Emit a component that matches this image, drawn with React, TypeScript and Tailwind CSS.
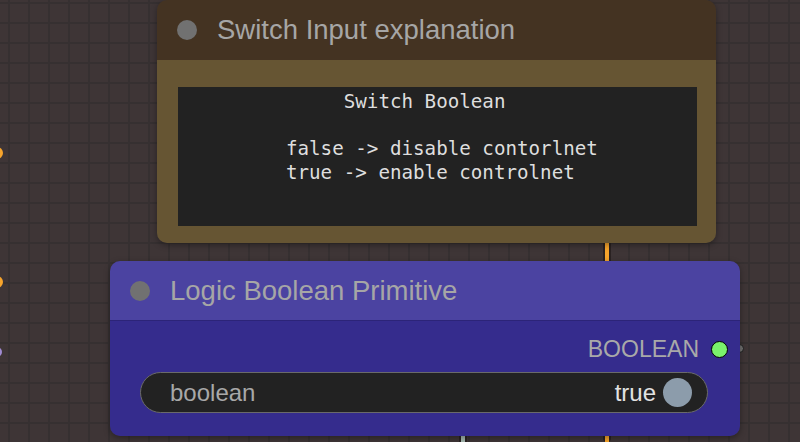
import React from "react";

const NOTE_TEXT = [
    "              Switch Boolean",
    "",
    "         false -> disable contorlnet",
    "         true -> enable controlnet",
].join("\n");

function TitleBar({ title, className }: { title: string; className: string }) {
    return (
        <div className={`h-[60px] shrink-0 flex items-center pl-[20px] gap-[20px] ${className}`}>
            <div className="w-[20px] h-[20px] rounded-full bg-[#717171]" />
            <span className="text-[27.5px] leading-none text-[#a6a6a6] whitespace-nowrap">{title}</span>
        </div>
    );
}

function NoteNode() {
    return (
        <div className="absolute left-[157px] top-0 w-[559px] h-[243px] rounded-[10px] overflow-hidden flex flex-col shadow-[0_2px_6px_rgba(0,0,0,0.35)]">
            <TitleBar title="Switch Input explanation" className="bg-[#443322]" />
            <div className="flex-1 bg-[#665533] pt-[27px] pl-[21px] pr-[19px] pb-[17px]">
                <pre className="h-full bg-[#222222] text-[#dedede] font-['DejaVu_Sans_Mono',monospace] text-[19.2px] leading-[23.5px] pt-[3px] pl-[4px] whitespace-pre overflow-hidden">
                    {NOTE_TEXT}
                </pre>
            </div>
        </div>
    );
}

function BooleanNode() {
    return (
        <div className="absolute left-[110px] top-[261px] w-[630px] h-[175px] rounded-[10px] overflow-hidden flex flex-col shadow-[0_2px_6px_rgba(0,0,0,0.35)]">
            <TitleBar title="Logic Boolean Primitive" className="bg-[#4b43a1] border-b border-[#2c2478]" />
            <div className="flex-1 bg-[#352c8d] pt-[8px] flex flex-col">
                {/* output slot */}
                <div className="h-[40px] flex items-center justify-end gap-[12px] pr-[12px]">
                    <span className="text-[23px] leading-none text-[#a9a9a9]">BOOLEAN</span>
                    <div className="w-[17px] h-[17px] rounded-full bg-[#7af26c] border-[1.5px] border-black" />
                </div>
                {/* toggle widget */}
                <div className="mt-[3px] ml-[30px] w-[568px] h-[41px] rounded-full bg-[#222222] border-[1.5px] border-[#6a6a6a] flex items-center pl-[29px] pr-[15px]">
                    <span className="flex-1 text-[24px] leading-none text-[#a8a8a8]">boolean</span>
                    <span className="text-[24px] leading-none text-[#e2e2e2] mr-[7px]">true</span>
                    <div className="w-[29px] h-[29px] rounded-full bg-[#8c9cab]" />
                </div>
            </div>
        </div>
    );
}

export default function App() {
    return (
        <div className="relative w-[800px] h-[442px] overflow-hidden bg-[#3e3536] bg-[linear-gradient(to_right,#363031_2px,transparent_2px),linear-gradient(to_bottom,#363031_2px,transparent_2px)] bg-size-[20px_20px] bg-[length:20px_20px] bg-position-[8px_2px] bg-[position:8px_2px] font-['Liberation_Sans',Arial,sans-serif]">
            {/* wires behind the nodes */}
            <div className="absolute left-[603px] top-[230px] w-[8px] h-[212px] bg-[#2a2222] rounded-sm" />
            <div className="absolute left-[605px] top-[230px] w-[4px] h-[212px] bg-[#f6a42c]" />
            <div className="absolute left-[459px] top-[420px] w-[8px] h-[22px] bg-[#2a2222]" />
            <div className="absolute left-[461px] top-[420px] w-[4px] h-[22px] bg-[#a3b6ae]" />

            {/* slots peeking in from off-screen nodes */}
            <div className="absolute left-[-9px] top-[147px] w-[12px] h-[12px] rounded-full bg-[#f6a42c]" />
            <div className="absolute left-[-9px] top-[276px] w-[12px] h-[12px] rounded-full bg-[#f6a42c]" />
            <div className="absolute left-[-8px] top-[347px] w-[10px] h-[10px] rounded-full bg-[#a08bd2]" />

            {/* link end dot to the right of the output */}
            <div className="absolute left-[735px] top-[344px] w-[9px] h-[9px] rounded-full bg-[#6f6f6f] border border-[#1f1f1f]" />

            <NoteNode />
            <BooleanNode />
        </div>
    );
}
